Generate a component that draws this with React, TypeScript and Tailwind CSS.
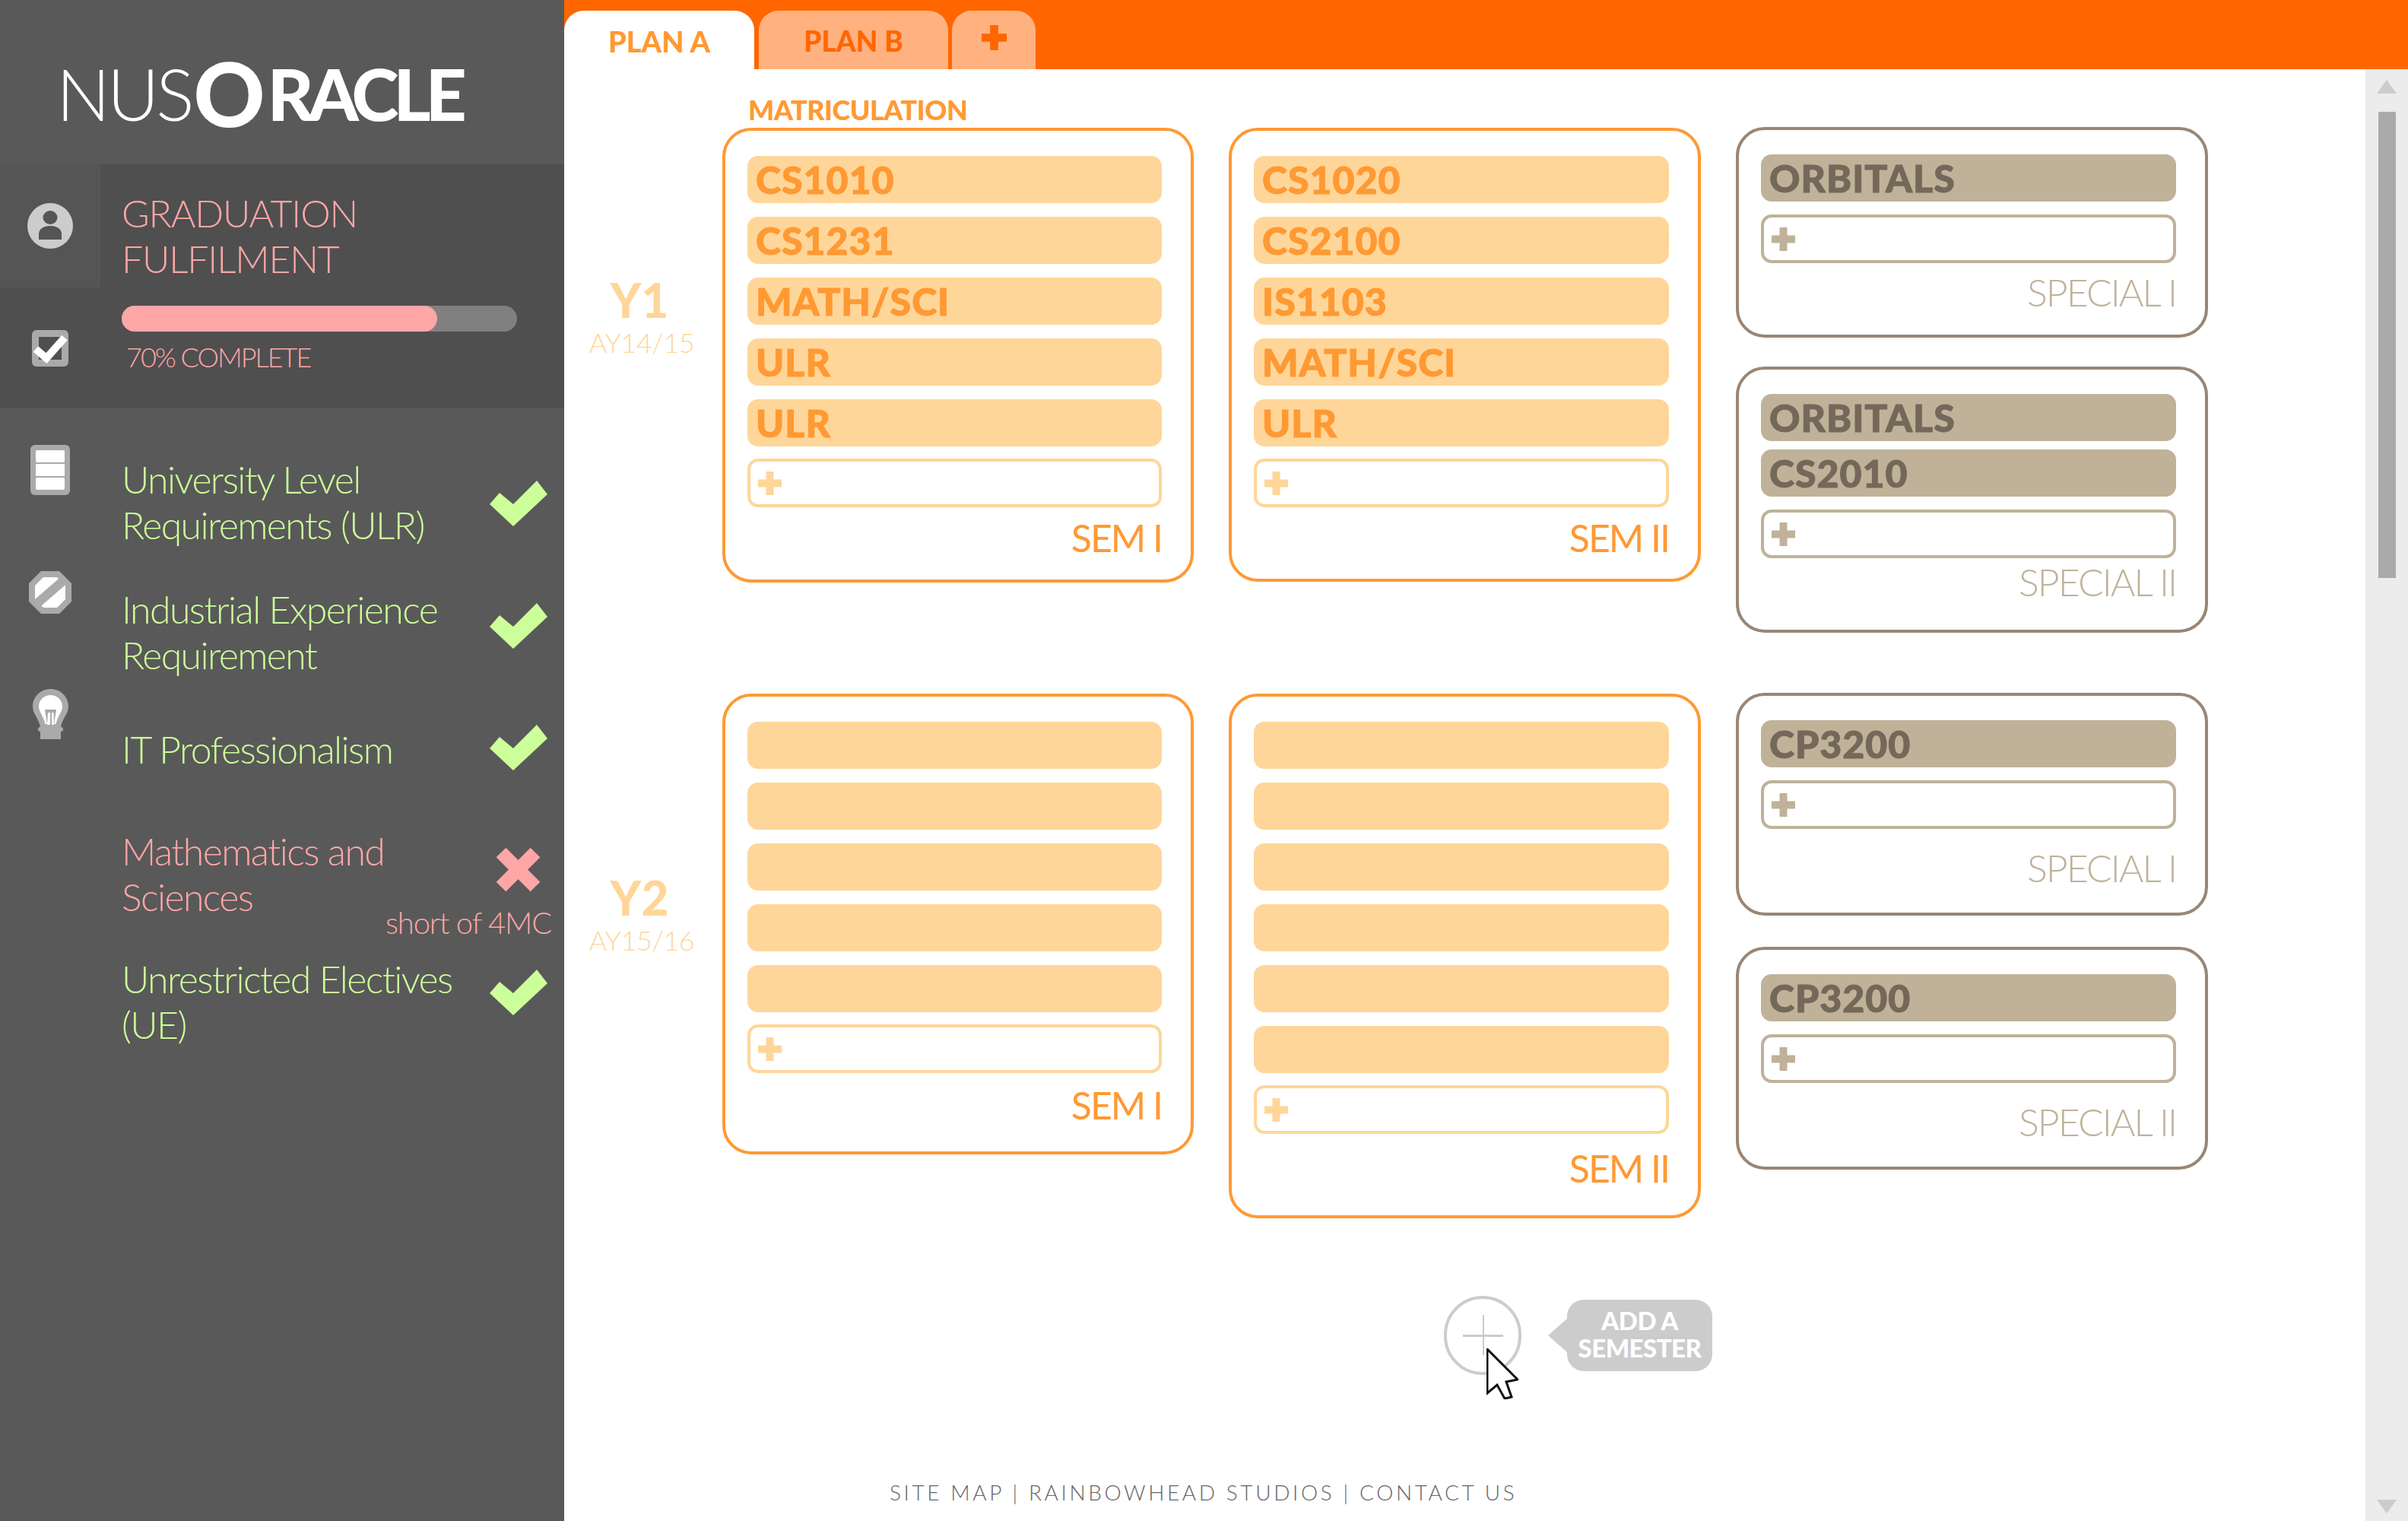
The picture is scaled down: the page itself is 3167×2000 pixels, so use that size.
import React from 'react';

const fulfilment = [
  { lines: ['University Level', 'Requirements (ULR)'], ok: true, box: 'mt-[63px]', icon: 'mt-[4px]' },
  { lines: ['Industrial Experience', 'Requirement'], ok: true, box: 'mt-[51px]', icon: 'mb-[16px]' },
  { lines: ['IT Professionalism'], ok: true, box: 'mt-[62px]', icon: 'mb-[4px]' },
  { lines: ['Mathematics and', 'Sciences'], ok: false, box: 'mt-[72px]', icon: 'mb-[12px]' },
  { lines: ['Unrestricted Electives', '(UE)'], ok: true, box: 'mt-[14px]', icon: 'mb-[24px]' },
];

const GreenCheck = ({ className = '' }: { className?: string }) => (
  <svg width="76" height="60" viewBox="0 0 76 60" className={className}>
    <polygon points="0,31 13,16 31,31 62,0 76,18 31,60" fill="#ccff99" />
  </svg>
);

const PinkCross = ({ className = '' }: { className?: string }) => (
  <svg width="61" height="61" viewBox="0 0 61 61" className={className}>
    <path d="M8 8 L53 53 M53 8 L8 53" stroke="#ffa6a6" strokeWidth="18" />
  </svg>
);

const PlusMark = ({ color, size = 31 }: { color: string; size?: number }) => (
  <svg width={size} height={size} viewBox="0 0 31 31">
    <path d="M10.5 0h10v10.5H31v10H20.5V31h-10V20.5H0v-10h10.5z" fill={color} />
  </svg>
);

const PersonIcon = () => (
  <svg width="60" height="60" viewBox="0 0 60 60">
    <ellipse cx="30" cy="30" rx="30" ry="30" fill="#cccccc" />
    <ellipse cx="30" cy="19" rx="9.5" ry="9" fill="#555555" />
    <path d="M15 48V41C15 34 21 30 30 30S45 34 45 41V48Z" fill="#555555" />
  </svg>
);

const CheckBoxIcon = () => (
  <svg width="48" height="48" viewBox="0 0 48 48">
    <rect width="48" height="48" rx="6" fill="#aaaaaa" />
    <rect x="9" y="9" width="30" height="30" fill="#4f4f4f" />
    <path d="M5 25 L19 37 L43 10" fill="none" stroke="#ffffff" strokeWidth="10" />
  </svg>
);

const TableIcon = () => (
  <svg width="52" height="66" viewBox="0 0 52 66">
    <rect width="52" height="66" rx="6" fill="#aaaaaa" />
    <rect x="7" y="7" width="38" height="16" rx="2" fill="#ffffff" />
    <rect x="7" y="25" width="38" height="16" fill="#ffffff" />
    <rect x="7" y="43" width="38" height="16" rx="2" fill="#ffffff" />
  </svg>
);

const BlockIcon = () => (
  <svg width="56" height="56" viewBox="0 0 56 56">
    <polygon points="16,0 40,0 56,16 56,40 40,56 16,56 0,40 0,16" fill="#aaaaaa" />
    <polygon points="19,8 37,8 48,19 48,37 37,48 19,48 8,37 8,19" fill="#ffffff" />
    <path d="M9 44 L46 12" stroke="#aaaaaa" strokeWidth="12" />
  </svg>
);

const BulbIcon = () => (
  <svg width="47" height="66" viewBox="0 0 47 66">
    <path d="M23.5 0C36.5 0 47 10 47 23C47 33 39 38 37 50H10C8 38 0 33 0 23C0 10 10.5 0 23.5 0Z" fill="#aaaaaa" />
    <rect x="7" y="50" width="33" height="6" rx="3" fill="#aaaaaa" />
    <rect x="10" y="55" width="27" height="11" fill="#aaaaaa" />
    <path d="M23.5 8C32 8 39 14.5 39 23C39 30 33 35 30.5 46H16.5C14 35 8 30 8 23C8 14.5 15 8 23.5 8Z" fill="#ffffff" />
    <path d="M16 27H31L28 47H19Z" fill="#aaaaaa" />
    <path d="M20 31H23V47H19ZM25 31H27.5L28 47H25Z" fill="#ffffff" />
  </svg>
);

const CursorIcon = () => (
  <svg width="42" height="67" viewBox="-1 -1 42 67">
    <polygon points="0,0 0,58 13,47 23,65 32,63 25,43 40,40" fill="#ffffff" stroke="#111111" strokeWidth="3" />
  </svg>
);

const Sidebar = () => (
  <aside className="flex w-[742px] shrink-0 flex-col bg-[#595959]">
    <div className="flex h-[216px] items-center pt-[30px] pl-[74px] text-white">
      <span className="text-[94px] leading-none font-light tracking-[-4px]">NUS</span>
      <span className="mx-[3px] text-[116px] leading-none font-black">O</span>
      <span className="text-[94px] leading-none font-black tracking-[-7px]">RACLE</span>
    </div>

    <div className="flex h-[321px]">
      <div className="flex w-[132px] flex-col">
        <div className="flex h-[162px] items-start justify-center bg-[#555555] pt-[51px]">
          <PersonIcon />
        </div>
        <div className="flex h-[159px] items-start justify-center bg-[#4f4f4f] pt-[56px]">
          <CheckBoxIcon />
        </div>
      </div>
      <div className="flex-1 bg-[#4f4f4f] pt-[34px] pl-[28px] text-[#ffa6a6]">
        <div className="text-[50px] leading-[60px] font-light tracking-[-1.2px]">
          GRADUATION
          <br />
          FULFILMENT
        </div>
        <div className="mt-[32px] h-[34px] w-[520px] rounded-full bg-[#808080]">
          <div className="h-full w-[415px] rounded-full bg-[#ffa6a6]" />
        </div>
        <div className="mt-[8px] pl-[6px] text-[36px] leading-[50px] font-light tracking-[-2px]">70% COMPLETE</div>
      </div>
    </div>

    <div className="flex flex-1">
      <div className="flex w-[132px] flex-col items-center pt-[48px]">
        <TableIcon />
        <div className="mt-[100px]">
          <BlockIcon />
        </div>
        <div className="mt-[99px]">
          <BulbIcon />
        </div>
      </div>
      <ul className="flex-1 pl-[28px]">
        {fulfilment.map(item => (
          <li key={item.lines[0]} className={item.box}>
            <div className="flex items-center justify-between pr-[22px]">
              <div className={`text-[50px] leading-[60px] font-light tracking-[-1.6px] whitespace-nowrap ${item.ok ? 'text-[#ccff99]' : 'text-[#ffa6a6]'}`}>
                {item.lines.map(line => (
                  <div key={line}>{line}</div>
                ))}
              </div>
              {item.ok ? <GreenCheck className={item.icon} /> : <PinkCross className={`mr-[8px] ${item.icon}`} />}
            </div>
            {!item.ok && (
              <div className="-mt-[26px] pr-[17px] text-right text-[40px] leading-[60px] font-light tracking-[-1.2px] text-[#ffa6a6]">short of 4MC</div>
            )}
          </li>
        ))}
      </ul>
    </div>
  </aside>
);

const Tabs = () => (
  <div className="flex h-[91px] shrink-0 items-end bg-[#ff6600]">
    <div className="flex h-[77px] w-[250px] items-center justify-center rounded-t-[26px] bg-white pt-[3px] text-[38px] font-black text-[#ff9933]">
      PLAN A
    </div>
    <div className="ml-[6px] flex h-[77px] w-[249px] items-center justify-center rounded-t-[26px] bg-[#ffb27f] pt-[3px] text-[37px] font-black text-[#ff6600]">
      PLAN B
    </div>
    <div className="ml-[5px] flex h-[77px] w-[110px] items-center justify-center rounded-t-[26px] bg-[#ffb27f] pb-[6px]">
      <PlusMark color="#ff6600" size={33} />
    </div>
  </div>
);

type CardProps = {
  label: string;
  mods?: string[];
  blanks?: number;
  brown?: boolean;
  tightRows?: boolean;
  labelClass: string;
  pad: string;
};

const Card = ({ label, mods = [], blanks = 0, brown = false, tightRows = false, labelClass, pad }: CardProps) => {
  const rows = [...mods, ...Array.from({ length: blanks }, () => '')];
  return (
    <div className={`rounded-[38px] border-[4px] bg-white pr-[38px] pl-[29px] ${brown ? 'border-[#998675] pt-[32px]' : 'border-[#ff9933] pt-[33px]'} ${pad}`}>
      <div className={`flex flex-col ${tightRows ? 'gap-[11px]' : 'gap-[18px]'}`}>
        {rows.map((mod, i) => (
          <div
            key={i}
            className={`flex h-[62px] items-center rounded-[14px] pl-[11px] text-[50px] font-black tracking-[1px] [-webkit-text-stroke:1px_currentColor] ${brown ? 'bg-[#bfb299] text-[#736859]' : 'bg-[#ffd699] text-[#ff9933]'}`}
          >
            {mod}
          </div>
        ))}
      </div>
      <div className={`flex h-[64px] items-center rounded-[14px] border-[4px] pl-[10px] ${brown ? 'mt-[17px] border-[#bfb299]' : 'mt-[16px] border-[#ffd699]'}`}>
        <PlusMark color={brown ? '#bfb299' : '#ffd699'} />
      </div>
      <div className={`h-[60px] text-right text-[50px] leading-[60px] tracking-[-2px] ${brown ? 'font-light text-[#bfb299]' : 'font-normal text-[#ff9933]'} ${labelClass}`}>
        {label}
      </div>
    </div>
  );
};

const YearLabel = ({ year, ay, offset }: { year: string; ay: string; offset: string }) => (
  <div className={`w-[208px] shrink-0 pr-[4px] text-center text-[#ffd699] ${offset}`}>
    <div className="pr-[6px] text-[62px] leading-[44px] font-black">{year}</div>
    <div className="mt-[14px] text-[36px] leading-[40px] font-light tracking-[-0.5px]">{ay}</div>
  </div>
);

const Scrollbar = () => (
  <div className="flex w-[56px] shrink-0 flex-col items-center bg-[#ececec] pt-[14px] pb-[10px]">
    <svg width="26" height="18" viewBox="0 0 26 18">
      <polygon points="13,0 26,18 0,18" fill="#cccccc" />
    </svg>
    <div className="mt-[24px] h-[613px] w-[23px] rounded-t-[2px] bg-[#aaaaaa]" />
    <svg width="26" height="18" viewBox="0 0 26 18" className="mt-auto">
      <polygon points="0,0 26,0 13,18" fill="#cccccc" />
    </svg>
  </div>
);

export default function App() {
  return (
    <div className="flex h-[2000px] w-[3167px] overflow-hidden bg-white font-['Lato',sans-serif]">
      <Sidebar />
      <main className="flex min-w-0 flex-1 flex-col">
        <Tabs />
        <div className="flex min-h-0 flex-1">
          <div className="flex flex-1 flex-col">
            <div className="h-[76px] pt-[35px] pl-[242px] text-[36px] leading-[36px] font-black tracking-[-0.5px] text-[#ff9933]">MATRICULATION</div>

            <section className="flex">
              <YearLabel year="Y1" ay="AY14/15" offset="pt-[205px]" />
              <div className="flex gap-[46px]">
                <div className="mt-px w-[620px]">
                  <Card label="SEM I" mods={['CS1010', 'CS1231', 'MATH/SCI', 'ULR', 'ULR']} labelClass="mt-[10px]" pad="pb-[25px]" />
                </div>
                <div className="mt-px w-[621px]">
                  <Card label="SEM II" mods={['CS1020', 'CS2100', 'IS1103', 'MATH/SCI', 'ULR']} labelClass="mt-[10px]" pad="pb-[24px]" />
                </div>
                <div className="flex w-[621px] flex-col gap-[38px]">
                  <Card brown label="SPECIAL I" mods={['ORBITALS']} labelClass="mt-[8px]" pad="pb-[26px]" />
                  <Card brown tightRows label="SPECIAL II" mods={['ORBITALS', 'CS2010']} labelClass="mt-[1px]" pad="pb-[33px]" />
                </div>
              </div>
            </section>

            <section className="mt-[79px] flex">
              <YearLabel year="Y2" ay="AY15/16" offset="pt-[247px]" />
              <div className="flex gap-[46px]">
                <div className="mt-px w-[620px]">
                  <Card label="SEM I" blanks={5} labelClass="mt-[12px]" pad="pb-[31px]" />
                </div>
                <div className="mt-px w-[621px]">
                  <Card label="SEM II" blanks={6} labelClass="mt-[15px]" pad="pb-[32px]" />
                </div>
                <div className="flex w-[621px] flex-col gap-[41px]">
                  <Card brown label="SPECIAL I" mods={['CP3200']} labelClass="mt-[21px]" pad="pb-[29px]" />
                  <Card brown label="SPECIAL II" mods={['CP3200']} labelClass="mt-[21px]" pad="pb-[29px]" />
                </div>
              </div>
            </section>

            <div className="mt-[102px] flex items-center pl-[1157px]">
              <div className="relative flex h-[104px] w-[102px] items-center justify-center rounded-full border-[4px] border-[#cccccc]">
                <div className="h-[3px] w-[53px] bg-[#cccccc]" />
                <div className="absolute top-[21px] left-[47px] h-[53px] w-[2px] bg-[#cccccc]" />
                <div className="absolute top-[65px] left-[52px]">
                  <CursorIcon />
                </div>
              </div>
              <svg width="25" height="44" viewBox="0 0 25 44" className="ml-[35px]">
                <polygon points="0,22 25,0 25,44" fill="#cccccc" />
              </svg>
              <div className="flex h-[94px] w-[191px] flex-col items-center justify-center rounded-[22px] bg-[#cccccc] pb-[4px] text-[33px] leading-[36px] font-black tracking-[-0.5px] text-white">
                <div>ADD A</div>
                <div>SEMESTER</div>
              </div>
            </div>

            <div className="mt-[134px] pl-[428px] text-[28px] leading-[40px] font-light tracking-[3.6px] whitespace-nowrap text-[#666666]">
              SITE MAP | RAINBOWHEAD STUDIOS | CONTACT US
            </div>
          </div>
          <Scrollbar />
        </div>
      </main>
    </div>
  );
}
